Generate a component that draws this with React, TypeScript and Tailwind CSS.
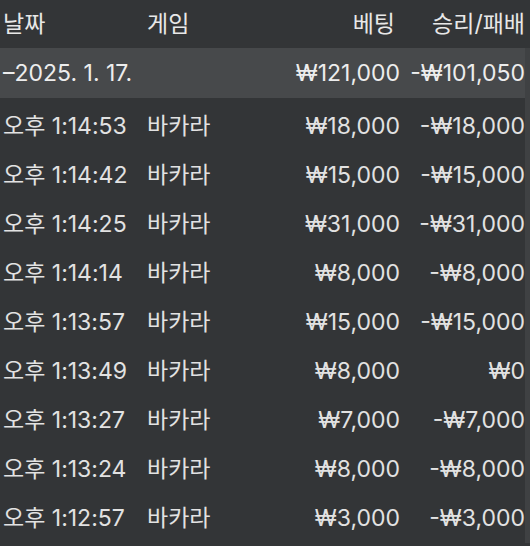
import React from "react";

const rows = [
  { time: "오후 1:14:53", game: "바카라", bet: "₩18,000", result: "-₩18,000" },
  { time: "오후 1:14:42", game: "바카라", bet: "₩15,000", result: "-₩15,000" },
  { time: "오후 1:14:25", game: "바카라", bet: "₩31,000", result: "-₩31,000" },
  { time: "오후 1:14:14", game: "바카라", bet: "₩8,000", result: "-₩8,000" },
  { time: "오후 1:13:57", game: "바카라", bet: "₩15,000", result: "-₩15,000" },
  { time: "오후 1:13:49", game: "바카라", bet: "₩8,000", result: "₩0" },
  { time: "오후 1:13:27", game: "바카라", bet: "₩7,000", result: "-₩7,000" },
  { time: "오후 1:13:24", game: "바카라", bet: "₩8,000", result: "-₩8,000" },
  { time: "오후 1:12:57", game: "바카라", bet: "₩3,000", result: "-₩3,000" },
];

const grid = "grid grid-cols-[144px_133px_120px_125px] items-center pl-[3px] whitespace-nowrap";

export default function App() {
  return (
    <div
      className="w-[530px] h-[546px] overflow-hidden bg-[#333537] text-[#e2e2e2] text-[23px]"
      style={{ fontFamily: "Inter, 'Noto Sans CJK KR', sans-serif" }}
    >
      {/* header */}
      <div className={`${grid} h-[48px] text-[#e8e8e8]`}>
        <span>날짜</span>
        <span>게임</span>
        <span className="text-right pr-[5px]">베팅</span>
        <span className="text-right">승리/패배</span>
      </div>

      <div className="flex">
        <div className="flex-1">
          {/* date summary */}
          <div className={`${grid} h-[50px] bg-[#47494b] text-[#ededed]`}>
            <span className="col-span-2">–2025. 1. 17.</span>
            <span className="text-right">₩121,000</span>
            <span className="text-right">-₩101,050</span>
          </div>

          <div className="pt-[4px]">
            {rows.map((r) => (
              <div key={r.time} className={`${grid} h-[49px]`}>
                <span>{r.time}</span>
                <span>{r.game}</span>
                <span className="text-right">{r.bet}</span>
                <span className="text-right">{r.result}</span>
              </div>
            ))}
          </div>
        </div>
        <div className="w-[5px] bg-[#3f4143]" />
      </div>
    </div>
  );
}
